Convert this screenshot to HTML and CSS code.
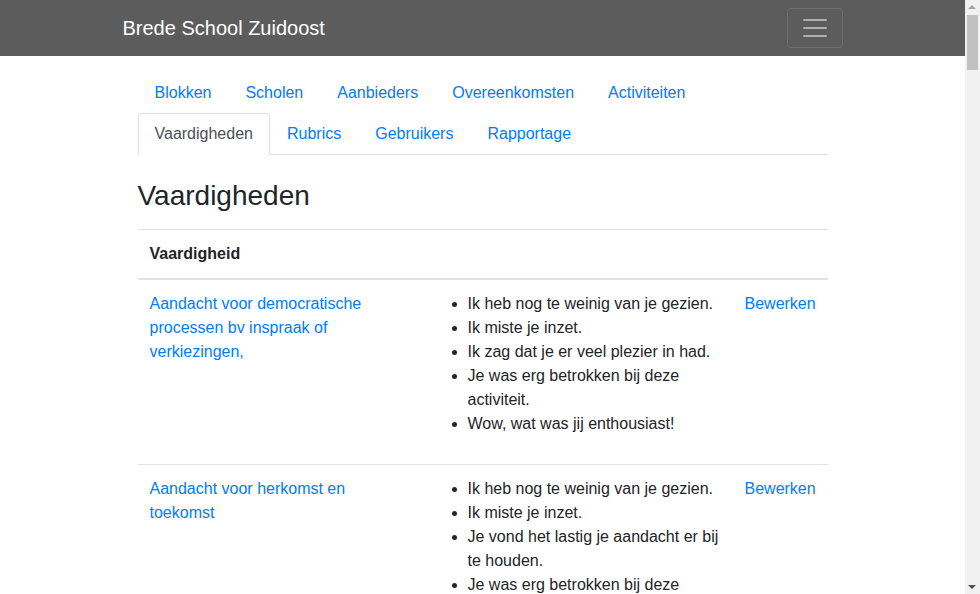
FILE: index.html
```html
<!DOCTYPE html>
<html lang="nl">
<head>
<meta charset="utf-8">
<title>Vaardigheden - Brede School Zuidoost</title>
<link rel="stylesheet" href="styles.css">
</head>
<body>
<div class="page">
<nav class="navbar">
  <div class="navbar-inner">
    <a class="brand" href="#">Brede School Zuidoost</a>
    <button class="toggler" type="button" aria-label="Menu">
      <svg width="30" height="30" viewBox="0 0 30 30"><path d="M4 7h22M4 15h22M4 23h22" stroke="rgba(255,255,255,0.5)" stroke-width="2" stroke-linecap="round"/></svg>
    </button>
  </div>
</nav>
<main class="container">
  <ul class="tabs">
    <li class="tab"><a class="tab-link" href="#">Blokken</a></li>
    <li class="tab"><a class="tab-link" href="#">Scholen</a></li>
    <li class="tab"><a class="tab-link" href="#">Aanbieders</a></li>
    <li class="tab"><a class="tab-link" href="#">Overeenkomsten</a></li>
    <li class="tab"><a class="tab-link" href="#">Activiteiten</a></li>
    <li class="tab"><a class="tab-link active" href="#">Vaardigheden</a></li>
    <li class="tab"><a class="tab-link" href="#">Rubrics</a></li>
    <li class="tab"><a class="tab-link" href="#">Gebruikers</a></li>
    <li class="tab"><a class="tab-link" href="#">Rapportage</a></li>
  </ul>
  <h3 class="title">Vaardigheden</h3>
  <table class="table">
    <colgroup><col class="c1"><col class="c2"><col class="c3"></colgroup>
    <thead>
      <tr><th>Vaardigheid</th><th></th><th></th></tr>
    </thead>
    <tbody>
      <tr>
        <td><a href="#">Aandacht voor democratische processen bv inspraak of verkiezingen,</a></td>
        <td><ul class="list">
          <li>Ik heb nog te weinig van je gezien.</li>
          <li>Ik miste je inzet.</li>
          <li>Ik zag dat je er veel plezier in had.</li>
          <li>Je was erg betrokken bij deze activiteit.</li>
          <li>Wow, wat was jij enthousiast!</li>
        </ul></td>
        <td><a href="#">Bewerken</a></td>
      </tr>
      <tr>
        <td><a href="#">Aandacht voor herkomst en toekomst</a></td>
        <td><ul class="list">
          <li>Ik heb nog te weinig van je gezien.</li>
          <li>Ik miste je inzet.</li>
          <li>Je vond het lastig je aandacht er bij te houden.</li>
          <li>Je was erg betrokken bij deze activiteit.</li>
          <li>Wow, wat was jij enthousiast!</li>
        </ul></td>
        <td><a href="#">Bewerken</a></td>
      </tr>
    </tbody>
  </table>
</main>
</div>
<div class="scrollbar" aria-hidden="true">
  <span class="arrow-up"></span>
  <span class="thumb"></span>
  <span class="arrow-down"></span>
</div>
</body>
</html>
```
FILE: styles.css
```css
* { box-sizing: border-box; }
html, body { margin: 0; }
body {
  font-family: "Liberation Sans", Arial, sans-serif;
  font-size: 16px;
  line-height: 1.5;
  color: #212529;
  background: #fff;
  overflow: hidden;
  height: 594px;
}
a { color: #007bff; text-decoration: none; }
.page {
  margin-right: 15px;
}
.navbar {
  background: #5c5c5c;
  padding: 8px 0;
}
.navbar-inner {
  width: 720px;
  margin: 0 auto;
  display: flex;
  align-items: center;
  justify-content: space-between;
}
.brand {
  color: #fff;
  font-size: 20px;
  line-height: 30px;
  padding: 5px 0;
}
.toggler {
  width: 56px;
  height: 40px;
  padding: 4px 12px;
  background: transparent;
  border: 1px solid rgba(255,255,255,0.1);
  border-radius: 4px;
  display: flex;
  align-items: center;
  justify-content: center;
}
.toggler svg { display: block; }
.container {
  width: 720px;
  margin: 0 auto;
  padding: 0 15px;
}
.tabs {
  list-style: none;
  margin: 16px 0 0;
  padding: 0;
  display: flex;
  flex-wrap: wrap;
  border-bottom: 1px solid #dee2e6;
}
.tab { margin-bottom: -1px; }
.tab-link {
  display: block;
  padding: 8px 16px;
  border: 1px solid transparent;
  border-top-left-radius: 4px;
  border-top-right-radius: 4px;
}
.tab-link.active {
  color: #495057;
  background: #fff;
  border-color: #dee2e6 #dee2e6 #fff;
}
.title {
  font-size: 28px;
  font-weight: 500;
  line-height: 1.2;
  margin: 24px 0 16px;
}
.table {
  width: 100%;
  border-collapse: collapse;
  table-layout: fixed;
}
.c1 { width: 278px; }
.c2 { width: 317px; }
.c3 { width: 95px; }
.table th, .table td {
  padding: 12px;
  vertical-align: top;
  border-top: 1px solid #dee2e6;
  text-align: left;
}
.table thead th {
  font-weight: 700;
  border-bottom: 2px solid #dee2e6;
}
.list {
  margin: 0 0 16px;
  padding-left: 40px;
}
.scrollbar {
  position: fixed;
  top: 0;
  right: 0;
  width: 15px;
  height: 594px;
  background: #f1f1f1;
}
.arrow-up {
  position: absolute;
  top: 5px;
  left: 3px;
  width: 0;
  height: 0;
  border-left: 4px solid transparent;
  border-right: 4px solid transparent;
  border-bottom: 4px solid #a3a3a3;
}
.thumb {
  position: absolute;
  top: 15px;
  left: 2px;
  width: 11px;
  height: 55px;
  background: #c1c1c1;
}
.arrow-down {
  position: absolute;
  bottom: 5px;
  left: 3px;
  width: 0;
  height: 0;
  border-left: 4px solid transparent;
  border-right: 4px solid transparent;
  border-top: 4px solid #505050;
}
```
